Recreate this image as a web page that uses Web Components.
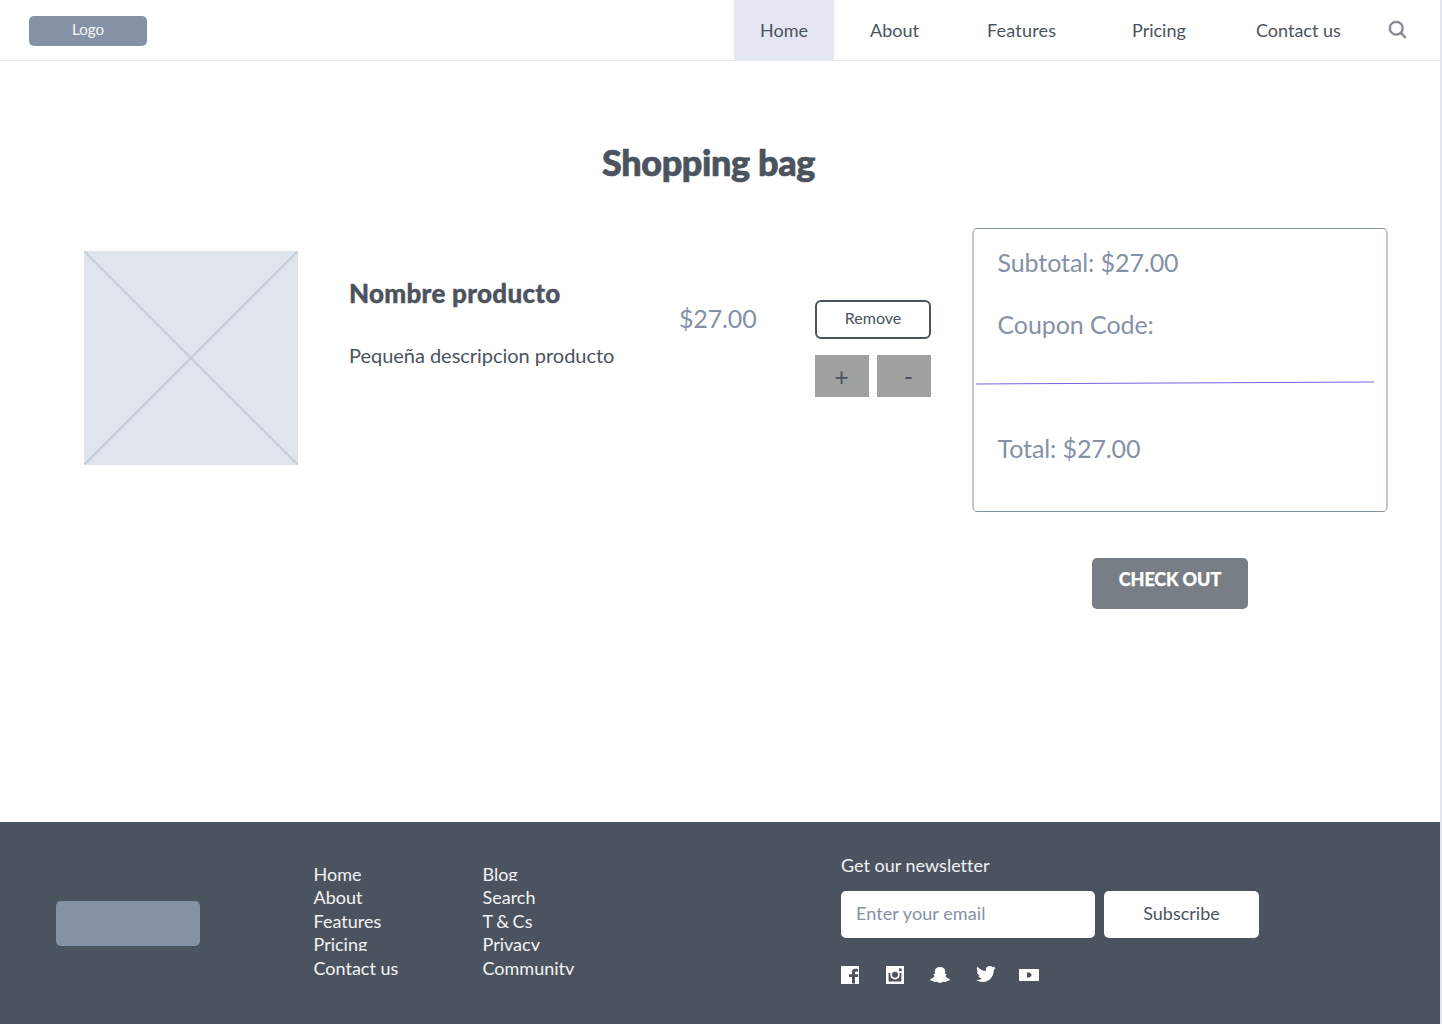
<!DOCTYPE html>
<html lang="es">
<head>
<meta charset="utf-8">
<title>Shopping bag</title>
<style>
html,body{margin:0;padding:0}
body{width:1442px;height:1024px;overflow:hidden;background:#fff;font-family:Lato,sans-serif;color:#4b535e;font-variant-ligatures:none}
</style>
</head>
<body>
<shop-page></shop-page>
<script>
const define = (name, html) => customElements.define(name, class extends HTMLElement {
  constructor() {
    super();
    const t = document.createElement('template');
    t.innerHTML = html;
    this.attachShadow({ mode: 'open' }).append(t.content.cloneNode(true));
  }
});

define('nav-item', `<style>
:host{display:flex;height:60px;align-items:center;font-size:18px;line-height:24px;white-space:nowrap;box-sizing:border-box}
:host([active]){background:#e4e7f1}
</style><slot></slot>`);

define('logo-box', `<style>
:host{display:block;box-sizing:border-box;background:#8591a5;border-radius:5px;color:#f7f8fa;text-align:center;font-size:15px;line-height:27px}
</style><slot></slot>`);

define('search-icon', `<style>:host{display:block;width:20px;height:20px}svg{display:block}</style>
<svg width="20" height="20" viewBox="0 0 20 20" fill="none" stroke="#4b535e"><path d="M5.5 2H11L14.5 5.5V11L11 14.5H5.5L2 11V5.5Z" stroke-width="3" stroke-opacity=".22" stroke-linejoin="round"/><circle cx="8.2" cy="8.2" r="6.4" stroke-width="1.8" stroke-opacity=".65"/><path d="M13 13l4.8 5" stroke-width="2.6" stroke-opacity=".6"/></svg>`);

define('site-header', `<style>
:host{display:flex;height:60px;border-bottom:1px solid #e4e7f1;width:1440px}
logo-box{width:118px;height:30px;margin:16px 587px 0 29px}
.home{width:100px;padding-left:26px}
.about{width:117px;padding-left:36px}
.features{width:145px;padding-left:36px;letter-spacing:.2px}
.pricing{width:124px;padding-left:36px}
.contact{width:132px;padding-left:36px}
search-icon{margin:20px 0 0 36px}
</style>
<logo-box>Logo</logo-box>
<nav-item active class="home">Home</nav-item>
<nav-item class="about">About</nav-item>
<nav-item class="features">Features</nav-item>
<nav-item class="pricing">Pricing</nav-item>
<nav-item class="contact">Contact us</nav-item>
<search-icon></search-icon>`);

define('image-placeholder', `<style>:host{display:block;width:214px;height:214px;background:#e0e5ed}svg{display:block}</style>
<svg width="214" height="214" stroke="#c3cdda" stroke-width="2"><path d="M0.5 0.5L213.5 213.5M213.5 0.5L0.5 213.5"/></svg>`);

define('product-row', `<style>
:host{display:flex;width:847px;margin-top:23px}
.info{width:330px;margin-left:51px;padding-top:27px}
h2{margin:0;font-size:26px;line-height:30px;font-weight:900;letter-spacing:.28px;-webkit-text-stroke:.4px #4b535e}
p{margin:34px 0 0;font-size:20px;line-height:26px;white-space:nowrap;letter-spacing:-.03px}
.price{width:136px;padding-top:52px;font-size:25px;line-height:30px;color:#8591a5;letter-spacing:-.15px}
.controls{width:116px;padding-top:49px}
.remove{box-sizing:border-box;height:39px;border:2px solid #4b535e;border-radius:6px;text-align:center;font-size:16px;line-height:31px}
.qty{display:flex;gap:8px;margin-top:16px}
.qty div{width:54px;height:42px;box-sizing:border-box;background:#9fa19e;text-align:center;font-size:25px;line-height:42px}
.qty .plus{padding-right:1px}
.qty .minus{padding-left:9px}
</style>
<image-placeholder></image-placeholder>
<div class="info"><h2>Nombre producto</h2><p>Pequeña descripcion producto</p></div>
<div class="price">$27.00</div>
<div class="controls"><div class="remove">Remove</div><div class="qty"><div class="plus">+</div><div class="minus">-</div></div></div>`);

define('order-summary', `<style>
:host{display:block;width:416px}
.card{box-sizing:border-box;width:416px;height:284px;border:solid #8591a5;border-width:1px 2px;border-left-color:#c2c8d2;border-right-color:#c2c8d2;border-radius:5px;padding-top:17px;color:#8591a5;font-size:25px;line-height:32px;letter-spacing:-.08px}
.card div{padding-left:23.5px}
.coupon{margin-top:30px}
svg{display:block;margin:40px 0 0 2px}
.card .total{margin-top:46px}
.checkout{box-sizing:border-box;width:156px;height:50.5px;margin:46px 0 0 120px;background:#787e85;border-radius:5px;color:#fff;text-align:center;font-weight:900;font-size:18px;line-height:43px;letter-spacing:-.12px;-webkit-text-stroke:.25px #fff}
</style>
<div class="card"><div>Subtotal: $27.00</div><div class="coupon">Coupon Code:</div>
<svg width="398" height="6"><path d="M0 4L398 2" stroke="#7763e0" stroke-width="1.1"/></svg>
<div class="total">Total: $27.00</div></div>
<div class="checkout">CHECK OUT</div>`);

define('footer-links', `<style>
:host{display:block;font-size:18px}
::slotted(div){height:15.35px;margin-bottom:8px;line-height:16px;white-space:nowrap}
::slotted(div:last-child){margin-top:8.6px}
::slotted(.clip){overflow:hidden}
::slotted(.tight){word-spacing:-1px}
</style><slot></slot>`);

define('social-links', `<style>:host{display:flex;align-items:center;height:20px}svg{display:block;fill:#fff}</style>
<svg width="18" height="18" style="margin-right:27px"><path fill-rule="evenodd" d="M0 0H18V18H0ZM11 17.5H14V11H17L17.3 8.3H14V6.5Q14 5.4 15.3 5.4H17V2.8H14.2Q11 2.8 11 6V8.3H8V11H11Z"/></svg>
<svg width="18" height="18" style="margin-right:26px"><path d="M0 0H18V18H0Z"/><g fill="#4b535e"><path d="M2.6 7H5V13.5H13V7H15.4V15.6H2.6Z"/><path d="M4 12H14V15H4Z"/><rect x="13" y="2.4" width="2.6" height="2.8"/></g><circle cx="9" cy="8.8" r="4.7"/><circle cx="9" cy="8.8" r="3" fill="#4b535e"/></svg>
<svg width="20" height="16" style="margin-right:26px"><path d="M10 0Q15 0 15.2 4.5V7L16.8 7L15.4 9Q16.8 11.4 19.8 12L19.5 13.4L16.7 14L16 15L13.3 14.8Q10 17 6.7 14.8L4 15L3.3 14L.5 13.4L.2 12Q3.2 11.4 4.6 9L3.2 7H4.8V4.5Q5 0 10 0Z"/></svg>
<svg width="20" height="16" style="margin:-2px 23px 0 0"><path d="M20 1.9L17.8 4.1Q17.8 10 13.8 13.4Q7.5 18 0 14.2Q3.5 14.3 5.8 12.5Q3 12 2.2 9.7H3.8Q1 8.6.8 5.6L2.4 6Q-.2 3.8 1.4.7Q5 4.7 9.9 5Q9.2 1.4 12.2.2Q14.8-.5 16.8 1.3L19.3.4L17.8 2.4Z"/></svg>
<svg width="20" height="12"><path fill-rule="evenodd" d="M.5 0H19.5L20 .5V11.5L19.5 12H.5L0 11.5V.5ZM8 3.6V8.4H10.5L12.4 7V5L10.5 3.6Z"/></svg>`);

define('newsletter-form', `<style>
:host{display:block;width:420px;padding-top:30px;font-size:18px}
.label{line-height:26px;color:#f3f4f6}
.row{display:flex;gap:9px;margin-top:13px}
.field,.btn{box-sizing:border-box;height:47px;border-radius:5px;background:#fff;line-height:45px}
.field{width:254px;padding-left:15px;color:#8591a5;letter-spacing:.08px}
.btn{width:155px;text-align:center;color:#4b535e}
social-links{margin-top:27px}
</style>
<div class="label">Get our newsletter</div>
<div class="row"><div class="field">Enter your email</div><div class="btn">Subscribe</div></div>
<social-links></social-links>`);

define('site-footer', `<style>
:host{display:flex;width:1440px;height:202px;background:#4b535e;color:#f3f4f6}
logo-box{width:144px;height:45px;margin:79px 113.5px 0 56px}
footer-links{margin-top:44.1px;width:169px}
footer-links + footer-links{width:358.5px}
</style>
<logo-box></logo-box>
<footer-links><div>Home</div><div>About</div><div>Features</div><div class="clip">Pricing</div><div>Contact us</div></footer-links>
<footer-links><div class="clip">Blog</div><div>Search</div><div class="tight">T &amp; Cs</div><div class="clip">Privacy</div><div class="clip">Community</div></footer-links>
<newsletter-form></newsletter-form>`);

define('shop-page', `<style>
:host{display:flex;flex-direction:column;box-sizing:border-box;width:1442px;height:1024px;border-right:2px solid #e2e6ee}
main{height:761px}
h1{margin:0;padding:79px 0 0;width:1417px;text-align:center;font-size:36px;line-height:44px;font-weight:900;letter-spacing:-.36px;-webkit-text-stroke:.7px #4b535e}
.content{display:flex;gap:41px;margin-top:44px;padding-left:84px}
</style>
<site-header></site-header>
<main><h1>Shopping bag</h1>
<div class="content"><product-row></product-row><order-summary></order-summary></div></main>
<site-footer></site-footer>`);
</script>
</body>
</html>
